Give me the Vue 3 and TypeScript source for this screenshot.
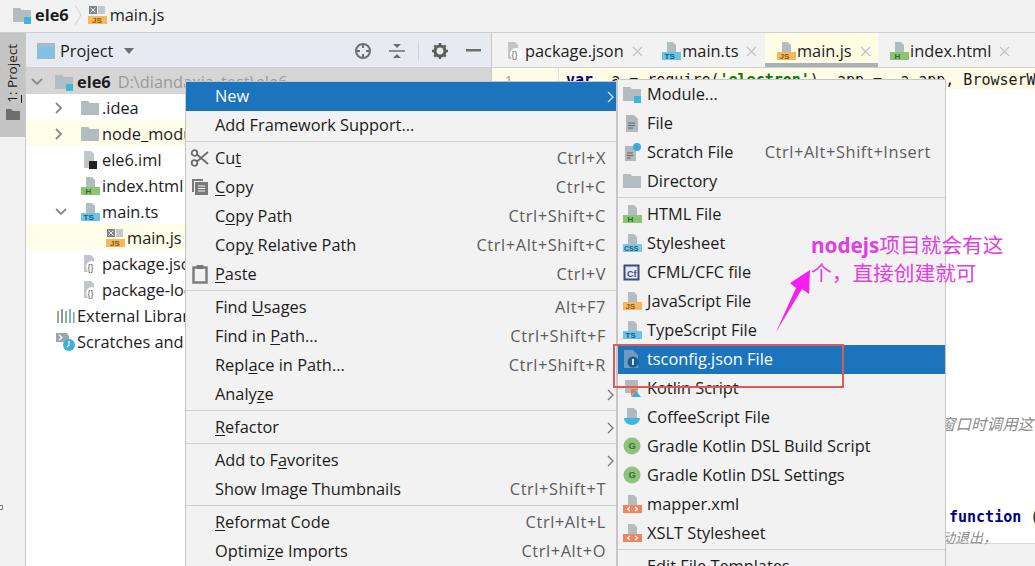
<script setup lang="ts">
type Item = { t: string; u?: number; k?: string; sub?: boolean; hi?: boolean; sep?: boolean; icon?: string };

const left: Item[] = [
  { t: 'New', sub: true, hi: true },
  { t: 'Add Framework Support...' },
  { t: '', sep: true },
  { t: 'Cut', u: 2, k: 'Ctrl+X', icon: 'cut' },
  { t: 'Copy', u: 0, k: 'Ctrl+C', icon: 'copy' },
  { t: 'Copy Path', u: 1, k: 'Ctrl+Shift+C' },
  { t: 'Copy Relative Path', u: 3, k: 'Ctrl+Alt+Shift+C' },
  { t: 'Paste', u: 0, k: 'Ctrl+V', icon: 'paste' },
  { t: '', sep: true },
  { t: 'Find Usages', u: 5, k: 'Alt+F7' },
  { t: 'Find in Path...', u: 8, k: 'Ctrl+Shift+F' },
  { t: 'Replace in Path...', u: 4, k: 'Ctrl+Shift+R' },
  { t: 'Analyze', u: 5, sub: true },
  { t: '', sep: true },
  { t: 'Refactor', u: 0, sub: true },
  { t: '', sep: true },
  { t: 'Add to Favorites', u: 8, sub: true },
  { t: 'Show Image Thumbnails', k: 'Ctrl+Shift+T' },
  { t: '', sep: true },
  { t: 'Reformat Code', u: 0, k: 'Ctrl+Alt+L' },
  { t: 'Optimize Imports', u: 6, k: 'Ctrl+Alt+O' }
];

const right: Item[] = [
  { t: 'Module...', icon: 'module' },
  { t: 'File', icon: 'file' },
  { t: 'Scratch File', k: 'Ctrl+Alt+Shift+Insert', icon: 'scratch' },
  { t: 'Directory', icon: 'dir' },
  { t: '', sep: true },
  { t: 'HTML File', icon: 'html' },
  { t: 'Stylesheet', icon: 'css' },
  { t: 'CFML/CFC file', icon: 'cf' },
  { t: 'JavaScript File', icon: 'js' },
  { t: 'TypeScript File', icon: 'ts' },
  { t: 'tsconfig.json File', hi: true, icon: 'tsconfig' },
  { t: 'Kotlin Script', icon: 'kotlin' },
  { t: 'CoffeeScript File', icon: 'coffee' },
  { t: 'Gradle Kotlin DSL Build Script', icon: 'gradle' },
  { t: 'Gradle Kotlin DSL Settings', icon: 'gradle' },
  { t: 'mapper.xml', icon: 'xml' },
  { t: 'XSLT Stylesheet', icon: 'xml' },
  { t: '', sep: true },
  { t: 'Edit File Templates...' }
];

const tree = [
  { t: '.idea', ind: 54, chev: 'r', icon: 'dir' },
  { t: 'node_modules', ind: 54, chev: 'r', icon: 'dir', y: true },
  { t: 'ele6.iml', ind: 54, icon: 'iml' },
  { t: 'index.html', ind: 54, icon: 'html' },
  { t: 'main.ts', ind: 54, chev: 'd', icon: 'ts' },
  { t: 'main.js', ind: 79, icon: 'mainjs', y: true },
  { t: 'package.json', ind: 54, icon: 'pkg' },
  { t: 'package-lock.json', ind: 54, icon: 'pkg' },
  { t: 'External Libraries', ind: 29, icon: 'lib' },
  { t: 'Scratches and Consoles', ind: 29, icon: 'scr' }
];

const tabs = [
  { t: 'package.json', icon: 'pkg' },
  { t: 'main.ts', icon: 'ts' },
  { t: 'main.js', icon: 'js', active: true },
  { t: 'index.html', icon: 'html' }
];

function split(i: Item) {
  if (i.u === undefined) return [i.t, '', ''];
  return [i.t.slice(0, i.u), i.t[i.u], i.t.slice(i.u + 1)];
}
</script>

<template>
  <div class="ide">
    <header class="crumbs">
      <svg class="ic" viewBox="0 0 20 20"><use href="#i-module" /></svg>
      <b>ele6</b>
      <svg class="sep-chev" width="9" height="22" viewBox="0 0 9 22"><path d="M1 1l6 10-6 10" fill="none" stroke="#d0d0d0" /></svg>
      <svg class="ic" viewBox="0 0 20 20"><use href="#i-mainjs" /></svg>
      <span>main.js</span>
    </header>

    <div class="body">
      <aside class="strip">
        <div class="strip-tab">
          <span class="vert"><u>1</u>: Project</span>
          <svg width="14" height="11" viewBox="0 0 14 11"><path d="M0 0h5l2 2h7v9H0z" fill="#6e6e6e" /></svg>
        </div>
        <svg class="tiny" width="3" height="5" viewBox="0 0 3 5"><path d="M0 .5h2.500v4H0" fill="none" stroke="#777" /></svg>
      </aside>

      <section class="project">
        <div class="phead">
          <svg class="win" width="18" height="16" viewBox="0 0 18 16"><rect x=".5" y=".5" width="17" height="15" fill="#7fc4e4" stroke="#a9b4bc" /><rect x="1" y="1" width="16" height="3" fill="#a9bcc8" /></svg>
          <span class="ptitle">Project</span>
          <svg class="caret" width="10" height="6" viewBox="0 0 10 6"><path d="M0 0h10L5 6z" fill="#6e6e6e" /></svg>
          <span class="grow"></span>
          <svg width="18" height="18" viewBox="0 0 18 18"><circle cx="9" cy="9" r="7" fill="none" stroke="#6e6e6e" stroke-width="2" /><path d="M9 2v4M9 12v4M2 9h4M12 9h4" stroke="#6e6e6e" stroke-width="2" /></svg>
          <svg class="collapse" width="16" height="16" viewBox="0 0 16 16"><path d="M0 8h16" stroke="#6e6e6e" stroke-width="1.500" /><path d="M4 1h8L8 5zM4 15h8l-4-4z" fill="#6e6e6e" /></svg>
          <i class="divider"></i>
          <svg width="16" height="16" viewBox="0 0 16 16"><circle cx="8" cy="8" r="5" fill="none" stroke="#5e5e5e" stroke-width="3.200" /><path d="M8 0v3M8 13v3M0 8h3M13 8h3M2.300 2.300l2.200 2.200M11.500 11.500l2.200 2.200M13.700 2.300l-2.200 2.200M4.500 11.500l-2.200 2.200" stroke="#5e5e5e" stroke-width="2.400" /></svg>
          <svg class="minus" width="15" height="3" viewBox="0 0 15 3"><rect width="15" height="2.500" fill="#6e6e6e" /></svg>
        </div>
        <div class="root">
          <svg class="chev" width="12" height="8" viewBox="0 0 12 8"><path d="M1 1l5 5 5-5" fill="none" stroke="#8a8a8a" stroke-width="1.800" /></svg>
          <svg class="ic" viewBox="0 0 20 20"><use href="#i-module" /></svg>
          <b>ele6</b>
          <span class="path">D:\diandaxia_test\ele6</span>
        </div>
        <div v-for="r in tree" :key="r.t" class="row" :class="{ yellow: r.y }" :style="{ paddingLeft: r.ind + 'px' }">
          <svg v-if="r.chev === 'r'" class="chev side" width="8" height="12" viewBox="0 0 8 12"><path d="M1 1l5 5-5 5" fill="none" stroke="#8a8a8a" stroke-width="1.800" /></svg>
          <svg v-if="r.chev === 'd'" class="chev side" width="12" height="8" viewBox="0 0 12 8"><path d="M1 1l5 5 5-5" fill="none" stroke="#8a8a8a" stroke-width="1.800" /></svg>
          <svg class="ic" viewBox="0 0 20 20"><use :href="'#i-' + r.icon" /></svg>
          <span>{{ r.t }}</span>
        </div>
      </section>

      <section class="editor">
        <div class="tabs">
          <div v-for="tab in tabs" :key="tab.t" class="tab" :class="{ active: tab.active }">
            <svg class="ic" viewBox="0 0 20 20"><use :href="'#i-' + tab.icon" /></svg>
            <span>{{ tab.t }}</span>
            <svg class="x" width="11" height="11" viewBox="0 0 11 11"><path d="M1 1l9 9M10 1l-9 9" stroke="#c2c2c2" stroke-width="1.200" /></svg>
          </div>
        </div>
        <div class="code">
          <div class="line first">
            <span class="num">1</span>
            <code><b class="kw">var</b> _a = require(<b class="str">'electron'</b>), app = _a.app, BrowserW</code>
          </div>
          <div class="cmt c1">在创建窗口时调用这</div>
          <div class="fn"><b class="kw">function</b> (</div>
          <div class="cmt c2">动退出，</div>
        </div>
        <div class="foot"></div>
      </section>
    </div>

    <svg class="defs" width="0" height="0">
      <defs>
        <symbol id="i-dir" viewBox="0 0 20 20"><path d="M1 3h7l2 2h9v12H1z" fill="#b3bcc1" /></symbol>
        <symbol id="i-module" viewBox="0 0 20 20"><path d="M1 3h7l2 2h9v12H1z" fill="#b3bcc1" /><rect x="12" y="12" width="7" height="7" fill="#3fb6dc" /></symbol>
        <symbol id="i-file" viewBox="0 0 20 20"><path d="M4 2h8l4 4v13H4z" fill="#b3b8bc" /><path d="M6 10h7M6 12.500h7M6 15h5" stroke="#5d6468" /></symbol>
        <symbol id="i-scratch" viewBox="0 0 20 20"><path d="M3 4h8l3 3v12H3z" fill="#b3b8bc" /><path d="M5 11h6M5 13.500h6M5 16h4" stroke="#5d6468" /><circle cx="15" cy="5" r="4" fill="#3fa9dc" /></symbol>
        <symbol id="i-iml" viewBox="0 0 20 20"><path d="M4 1h7l3 3v14H4z" fill="#bfc5c9" /><rect x="9" y="11" width="8" height="8" fill="#222" /></symbol>
        <symbol id="i-html" viewBox="0 0 20 20"><path d="M6 1h6l3 3v7H6z" fill="#b3bcc1" /><rect x="1" y="11" width="19" height="8" fill="#8cc474" /><text x="5.500" y="18.300" font-size="8" font-weight="700" fill="#2c6a2c" font-family="Liberation Sans">H</text></symbol>
        <symbol id="i-css" viewBox="0 0 20 20"><path d="M6 1h6l3 3v7H6z" fill="#b3bcc1" /><rect x="1" y="11" width="19" height="8" fill="#7fc6e0" /><text x="2" y="18" font-size="7" font-weight="700" fill="#1b5a7a" font-family="Liberation Sans">CSS</text></symbol>
        <symbol id="i-js" viewBox="0 0 20 20"><path d="M6 1h6l3 3v7H6z" fill="#b3bcc1" /><rect x="1" y="11" width="19" height="8" fill="#f4b860" /><text x="3.500" y="18.300" font-size="8" font-weight="700" fill="#8a5a10" font-family="Liberation Sans">JS</text></symbol>
        <symbol id="i-mainjs" viewBox="0 0 20 20"><rect x="2" y="1" width="8" height="8" fill="#7d8388" /><path d="M3.500 2.500l5 5M8.500 2.500l-5 5" stroke="#eee" /><path d="M11 1h7v8h-7z" fill="#c4c8cb" /><rect x="1" y="11" width="19" height="8" fill="#f4b860" /><text x="5" y="18.300" font-size="8" font-weight="700" fill="#8a5a10" font-family="Liberation Sans">JS</text></symbol>
        <symbol id="i-ts" viewBox="0 0 20 20"><path d="M6 1h6l3 3v7H6z" fill="#b3bcc1" /><rect x="1" y="11" width="19" height="8" fill="#6cc4e6" /><text x="3.500" y="18.300" font-size="8" font-weight="700" fill="#12607f" font-family="Liberation Sans">TS</text></symbol>
        <symbol id="i-cf" viewBox="0 0 20 20"><rect x="2.500" y="3.500" width="14" height="14" fill="#e6e9f2" stroke="#3d4a80" stroke-width="2" /><text x="5" y="14.500" font-size="9" font-weight="700" fill="#3d4a80" font-family="Liberation Sans">Cf</text></symbol>
        <symbol id="i-tsconfig" viewBox="0 0 20 20"><path d="M2 1h9l5 5v13H2z" fill="#6f9cbd" /><circle cx="11" cy="13" r="5.500" fill="#1c5d94" /><rect x="10" y="10" width="2" height="6" fill="#cfe6f7" /></symbol>
        <symbol id="i-pkg" viewBox="0 0 20 20"><path d="M4 1h7l3 3v14H4z" fill="#bfc5c9" /><circle cx="12" cy="13" r="6" fill="#fff" /><text x="7.500" y="16.500" font-size="9" fill="#555" font-family="Liberation Sans">{}</text></symbol>
        <symbol id="i-kotlin" viewBox="0 0 20 20"><rect x="3" y="2" width="13" height="13" fill="#b3b8bc" /><path d="M9 19l5-6 5 6z" fill="#3fa9dc" /><path d="M9 11h7l-7 7z" fill="#ef7a3c" /></symbol>
        <symbol id="i-coffee" viewBox="0 0 20 20"><path d="M5 1h7l3 3v7H5z" fill="#b3b8bc" /><path d="M2 11h16a8 7 0 0 1-16 0z" fill="#3fb6dc" /></symbol>
        <symbol id="i-gradle" viewBox="0 0 20 20"><circle cx="10" cy="10" r="8.500" fill="#8fc27c" /><text x="6.600" y="13.400" font-size="9.500" font-weight="700" fill="#3c6b34" font-family="Liberation Sans">G</text></symbol>
        <symbol id="i-xml" viewBox="0 0 20 20"><path d="M6 1h6l3 3v7H6z" fill="#b3bcc1" /><rect x="1" y="11" width="19" height="8" fill="#ef8560" /><path d="M8 13l-2.500 2 2.500 2M13 13l2.500 2-2.500 2" fill="none" stroke="#fff" stroke-width="1.200" /></symbol>
        <symbol id="i-lib" viewBox="0 0 20 20"><path d="M2 5h2v12H2z" fill="#8fb27c" /><path d="M6 3h2v14H6z" fill="#8a9aa4" /><path d="M10 5h2v12h-2z" fill="#8fb27c" /><path d="M14 3h2v14h-2z" fill="#7fb6cf" /><path d="M18 6h1.500v11H18z" fill="#8a9aa4" /></symbol>
        <symbol id="i-scr" viewBox="0 0 20 20"><path d="M1 1h11l2 3v6H1z" fill="#9aa6ae" /><path d="M4 3l3 2.500-3 2.500" fill="none" stroke="#fff" stroke-width="1.200" /><circle cx="14" cy="13" r="6" fill="#3fb0dc" /><path d="M14 9v4l-2 2" fill="none" stroke="#fff" stroke-width="1.200" /></symbol>
        <symbol id="i-cut" viewBox="0 0 20 20"><circle cx="4.500" cy="5" r="2.800" fill="none" stroke="#6b6b6b" stroke-width="1.800" /><circle cx="4.500" cy="15" r="2.800" fill="none" stroke="#6b6b6b" stroke-width="1.800" /><path d="M7 6.500L18 16M7 13.500L18 4" stroke="#6b6b6b" stroke-width="1.800" /></symbol>
        <symbol id="i-copy" viewBox="0 0 20 20"><path d="M2 2h11v2H4v11H2z" fill="#7a7a7a" /><rect x="5" y="5" width="13" height="13" fill="#7a7a7a" /><path d="M8 9h7M8 11.500h7M8 14h7" stroke="#f2f2f2" /></symbol>
        <symbol id="i-paste" viewBox="0 0 20 20"><rect x="3.500" y="3.500" width="13" height="15" fill="none" stroke="#7a7a7a" stroke-width="2.400" /><rect x="6.500" y="1" width="7" height="4" fill="#7a7a7a" /></symbol>
      </defs>
    </svg>

    <div class="menu m1">
      <template v-for="(i, n) in left" :key="n">
        <div v-if="i.sep" class="sep"></div>
        <div v-else class="mi" :class="{ hi: i.hi }">
          <svg v-if="i.icon" class="mic" viewBox="0 0 20 20"><use :href="'#i-' + i.icon" /></svg>
          <span class="lbl">{{ split(i)[0] }}<u>{{ split(i)[1] }}</u>{{ split(i)[2] }}</span>
          <span v-if="i.k" class="key">{{ i.k }}</span>
          <svg v-if="i.sub" class="arrow" width="7" height="12" viewBox="0 0 7 12"><path d="M1 1l5 5-5 5" fill="none" :stroke="i.hi ? '#cfe3f5' : '#777'" stroke-width="1.300" /></svg>
        </div>
      </template>
    </div>

    <div class="menu m2">
      <template v-for="(i, n) in right" :key="n">
        <div v-if="i.sep" class="sep"></div>
        <div v-else class="mi" :class="{ hi: i.hi }">
          <svg v-if="i.icon" class="mic" viewBox="0 0 20 20"><use :href="'#i-' + i.icon" /></svg>
          <span class="lbl">{{ i.t }}</span>
          <span v-if="i.k" class="key">{{ i.k }}</span>
        </div>
      </template>
    </div>

    <div class="redbox"></div>
    <svg class="arrow-note" width="40" height="66" viewBox="0 0 40 66"><path d="M1 63L21 19 15 14 35 1 34 25 27 20z" fill="#f81df0" /></svg>
    <div class="note"><b>nodejs</b>项目就会有这<br />个，直接创建就可</div>
  </div>
</template>

<style>
html, body { margin: 0; overflow: hidden; background: #fff; }
</style>

<style scoped>
.ide {
  position: relative;
  width: 1035px;
  height: 566px;
  overflow: hidden;
  display: flex;
  flex-direction: column;
  font: 16.350px "Open Sans", "Noto Sans CJK SC", sans-serif;
  color: #1c1c1c;
  background: #fff;
}
.ic { width: 20px; height: 20px; flex: none; }
.defs { position: absolute; }
u { text-underline-offset: 2px; text-decoration-thickness: 1px; }
.crumbs {
  height: 33px;
  flex: none;
  box-sizing: border-box;
  padding: 0 0 2px 12px;
  display: flex;
  align-items: center;
  gap: 3px;
  background: #f2f2f2;
  border-bottom: 1px solid #cfcfcf;
}
.sep-chev { margin: 0 1px 0 2px; }
.body { flex: 1; display: flex; min-height: 0; }
.strip { width: 25px; flex: none; background: #f2f2f2; border-right: 1px solid #c9c9c9; position: relative; }
.tiny { position: absolute; left: 0; top: 472px; }
.strip-tab {
  height: 104px;
  background: #c5c5c5;
  display: flex;
  flex-direction: column;
  align-items: center;
  gap: 6px;
  padding-top: 11px;
  box-sizing: border-box;
}
.vert {
  writing-mode: vertical-rl;
  transform: rotate(180deg);
  font-size: 13.500px;
  line-height: 20px;
  margin-left: -2px;
}
.project { width: 466px; flex: none; box-sizing: border-box; border-right: 1px solid #c9c9c9; background: #fff; }
.phead {
  height: 35px;
  box-sizing: border-box;
  padding: 1px 10px 0 11px;
  display: flex;
  align-items: center;
  gap: 14px;
  background: #e7eaf0;
  border-bottom: 1px solid #d0d0d0;
}
.win { margin-right: -9px; }
.ptitle { margin-right: -3px; }
.grow { flex: 1; }
.collapse { margin-left: 3px; }
.divider { width: 1px; height: 20px; background: #cfd2d8; margin: 0 -1px; }
.minus { margin-left: 4px; }
.root {
  height: 26px;
  display: flex;
  align-items: center;
  padding: 2px 0 0 5px;
  box-sizing: border-box;
  background: #d5d5d5;
  white-space: nowrap;
}
.root .chev { margin-right: 11px; }
.root .ic { margin-right: 3px; }
.path { color: #9a9a9a; margin-left: 7px; }
.row {
  height: 26px;
  box-sizing: border-box;
  padding-top: 2px;
  position: relative;
  display: flex;
  align-items: center;
  gap: 2px;
  white-space: nowrap;
}
.row.yellow { background: #fdfdea; }
.chev.side { position: absolute; left: 29px; }
.editor { flex: 1; min-width: 0; display: flex; flex-direction: column; background: #fff; }
.tabs {
  height: 35px;
  flex: none;
  display: flex;
  background: #f2f2f2;
  border-bottom: 1px solid #d0d0d0;
  box-sizing: border-box;
  padding-left: 1px;
}
.tab {
  display: flex;
  align-items: center;
  gap: 1px;
  padding: 2px 7.500px 0 11px;
  height: 34px;
  box-sizing: border-box;
}
.tab .x { margin-left: 7px; }
.tab.active {
  background: #fefce3;
  border-bottom: 4px solid #a9b0b6;
  padding-top: 6px;
}
.code { flex: 1; position: relative; min-height: 0; }
.line.first {
  height: 21px;
  display: flex;
  background: #fefbe7;
  white-space: nowrap;
}
.num { width: 67px; flex: none; box-sizing: border-box; padding-left: 13px; color: #999; font-size: 13px; border-right: 1px solid #e0e0e0; line-height: 24px; }
code { font: 15px/24px "DejaVu Sans Mono", monospace; padding-left: 7px; }
.kw { color: #000080; font-weight: 700; }
.str { color: #008000; font-weight: 700; }
.cmt { position: absolute; color: #8c8c8c; font-style: italic; font-family: "Noto Sans CJK SC", sans-serif; white-space: nowrap; }
.c1 { left: 401px; top: 344px; font-size: 15.600px; }
.c2 { left: 449px; top: 459px; font-size: 14px; }
.fn { position: absolute; left: 457px; top: 440px; font: 15px "DejaVu Sans Mono", monospace; white-space: nowrap; }
.foot { height: 22px; flex: none; background: #f2f2f2; border-top: 1px solid #d8d8d8; }

.menu {
  position: absolute;
  background: #f2f2f2;
  border: 1px solid #c6c6c6;
  box-sizing: border-box;
}
.m1 { left: 185px; top: 81px; width: 432px; }
.m2 { left: 617px; top: 79px; width: 329px; }
.mi {
  height: 29px;
  display: flex;
  align-items: center;
  position: relative;
  white-space: nowrap;
  padding-bottom: 2px;
  box-sizing: border-box;
}
.m1 .mi { padding-left: 29px; padding-right: 10px; }
.m2 .mi { padding-left: 29px; padding-right: 14px; }
.mi.hi { background: #1c74bd; color: #fff; }
.mic { position: absolute; left: 4px; top: 4px; width: 20px; height: 20px; }
.lbl { flex: 1; }
.key { color: #5c5c5c; letter-spacing: .6px; }
.arrow { position: absolute; right: 2px; top: 9px; }
.sep { height: 4px; position: relative; }
.sep::after { content: ""; position: absolute; left: 0; right: 0; top: 1px; height: 1px; background: #cfcfcf; }
.redbox {
  position: absolute;
  left: 613px;
  top: 344px;
  width: 231px;
  height: 44px;
  box-sizing: border-box;
  border: 2px solid #dc5a5a;
  z-index: 2;
}
.arrow-note { position: absolute; left: 775px; top: 269px; }
.note {
  position: absolute;
  left: 811px;
  top: 231px;
  width: 224px;
  font-size: 20.700px;
  line-height: 28px;
  color: #e040e0;
  font-family: "Noto Sans", "Noto Sans CJK SC", sans-serif;
  white-space: nowrap;
}
</style>
